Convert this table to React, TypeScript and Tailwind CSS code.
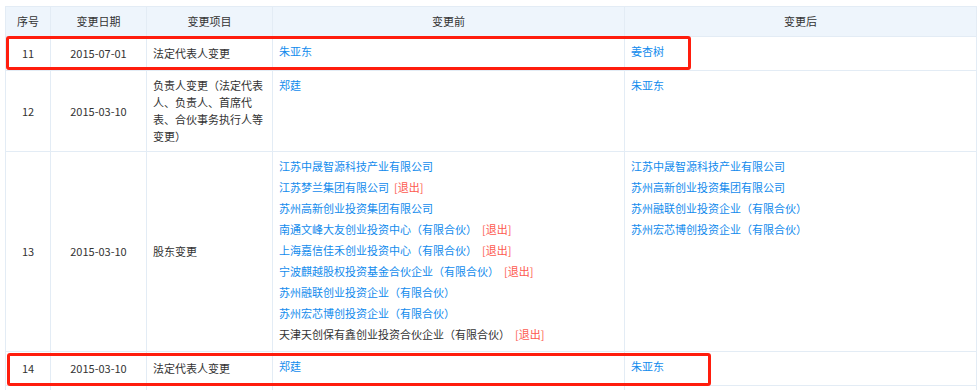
import type { ReactNode } from "react";

type Entry = { name: string; link?: boolean; quit?: boolean };

type Row = {
	no: string;
	date: string;
	item: string;
	before: Entry[];
	after: Entry[];
	h: string;
};

const rows: Row[] = [
	{
		no: "11",
		date: "2015-07-01",
		item: "法定代表人变更",
		before: [{ name: "朱亚东", link: true }],
		after: [{ name: "姜杏树", link: true }],
		h: "h-[34px]",
	},
	{
		no: "12",
		date: "2015-03-10",
		item: "负责人变更（法定代表人、负责人、首席代表、合伙事务执行人等变更）",
		before: [{ name: "郑莛", link: true }],
		after: [{ name: "朱亚东", link: true }],
		h: "h-[81px]",
	},
	{
		no: "13",
		date: "2015-03-10",
		item: "股东变更",
		before: [
			{ name: "江苏中晟智源科技产业有限公司", link: true },
			{ name: "江苏梦兰集团有限公司", link: true, quit: true },
			{ name: "苏州高新创业投资集团有限公司", link: true },
			{ name: "南通文峰大友创业投资中心（有限合伙）", link: true, quit: true },
			{ name: "上海嘉信佳禾创业投资中心（有限合伙）", link: true, quit: true },
			{ name: "宁波麒越股权投资基金合伙企业（有限合伙）", link: true, quit: true },
			{ name: "苏州融联创业投资企业（有限合伙）", link: true },
			{ name: "苏州宏芯博创投资企业（有限合伙）", link: true },
			{ name: "天津天创保有鑫创业投资合伙企业（有限合伙）", quit: true },
		],
		after: [
			{ name: "江苏中晟智源科技产业有限公司", link: true },
			{ name: "苏州高新创业投资集团有限公司", link: true },
			{ name: "苏州融联创业投资企业（有限合伙）", link: true },
			{ name: "苏州宏芯博创投资企业（有限合伙）", link: true },
		],
		h: "h-[200px]",
	},
	{
		no: "14",
		date: "2015-03-10",
		item: "法定代表人变更",
		before: [{ name: "郑莛", link: true }],
		after: [{ name: "朱亚东", link: true }],
		h: "h-[34px]",
	},
];

const cols = "grid grid-cols-[45px_96px_126px_352px_352px]";

function Names({ list }: { list: Entry[] }) {
	return (
		<div className="border-r border-[#e3ecf5] px-[6px] pt-[4px] leading-[21px]">
			{list.map((e) => (
				<div key={e.name}>
					<span className={e.link ? "text-[#128bed]" : "text-[#333]"}>{e.name}</span>
					{e.quit && <span className="ml-[5px] text-[#fd5a4f]">[退出]</span>}
				</div>
			))}
		</div>
	);
}

function Center({ children }: { children?: ReactNode }) {
	return (
		<div className="flex items-center justify-center border-r border-[#e3ecf5]">{children}</div>
	);
}

export default function App() {
	return (
		<div
			className="relative h-[390px] w-[979px] overflow-hidden bg-white pl-[5px] pt-[6px] text-[11px] text-[#333]"
			style={{ fontFamily: '"Noto Sans CJK SC", "Noto Sans", sans-serif' }}
		>
			<div className="w-[972px] border-l border-t border-[#e3ecf5]">
				<div className={`${cols} h-[30px] border-b border-[#e3ecf5] bg-[#eef5fc]`}>
					<Center>序号</Center>
					<Center>变更日期</Center>
					<Center>变更项目</Center>
					<Center>变更前</Center>
					<Center>变更后</Center>
				</div>

				{rows.map((r) => (
					<div key={r.no} className={`${cols} ${r.h} border-b border-[#e3ecf5]`}>
						<Center>{r.no}</Center>
						<Center>{r.date}</Center>
						<div className="flex items-center border-r border-[#e3ecf5] px-[6px] leading-[17px]">
							<span>{r.item}</span>
						</div>
						<Names list={r.before} />
						<Names list={r.after} />
					</div>
				))}

				<div className={`${cols} h-[34px] border-b border-[#e3ecf5]`}>
					<Center />
					<Center />
					<Center />
					<Center />
					<Center />
				</div>
			</div>

			{/* highlight boxes */}
			<div className="absolute left-[6px] top-[36px] h-[34px] w-[685px] rounded-[3px] border-[3px] border-[#ff1d0d]" />
			<div className="absolute left-[7px] top-[353px] h-[33px] w-[704px] rounded-[3px] border-[3px] border-[#ff1d0d]" />
		</div>
	);
}
